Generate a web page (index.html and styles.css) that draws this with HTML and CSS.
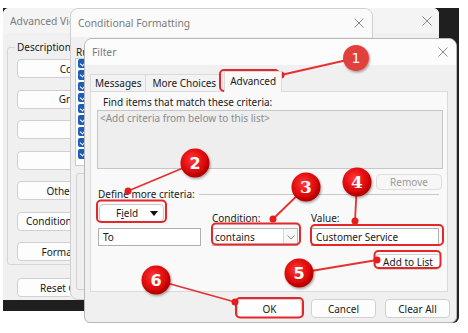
FILE: index.html
```html
<!DOCTYPE html>
<html lang="en">
<head>
<meta charset="utf-8">
<title>Filter</title>
<link rel="stylesheet" href="styles.css">
</head>
<body>
<div class="desk">
  <div class="backdrop"></div>

  <section class="win win-adv">
    <header class="tbar">
      <span class="ttl">Advanced View Settings: Compact</span>
      <svg class="close" viewBox="0 0 10 10"><path d="M0.5 0.5 9.5 9.5M9.5 0.5 0.5 9.5"/></svg>
    </header>
    <div class="adv-body">
      <fieldset class="grp">
        <legend>Description</legend>
        <button class="btn side">Columns...</button>
        <button class="btn side">Group By...</button>
        <button class="btn side">Sort...</button>
        <button class="btn side">Filter...</button>
        <button class="btn side">Other Settings...</button>
        <button class="btn side">Conditional Formatting...</button>
        <button class="btn side">Format Columns...</button>
      </fieldset>
      <button class="btn side reset">Reset Current View</button>
    </div>
  </section>

  <section class="win win-cf">
    <header class="tbar">
      <span class="ttl">Conditional Formatting</span>
      <svg class="close" viewBox="0 0 10 10"><path d="M0.5 0.5 9.5 9.5M9.5 0.5 0.5 9.5"/></svg>
    </header>
    <div class="cf-body">
      <div class="cf-label">Rules for this view:</div>
      <div class="cf-list">
        <span class="chk"></span><span class="chk"></span><span class="chk"></span>
        <span class="chk"></span><span class="chk"></span><span class="chk"></span>
        <span class="chk"></span><span class="chk"></span><span class="chk"></span>
      </div>
      <div class="cf-props"></div>
    </div>
  </section>

  <section class="win win-filter">
    <header class="tbar">
      <span class="ttl">Filter</span>
      <svg class="close" viewBox="0 0 10 10"><path d="M0.5 0.5 9.5 9.5M9.5 0.5 0.5 9.5"/></svg>
    </header>
    <div class="f-body">
      <div class="tabs">
        <span class="tab tab-msg">Messages</span>
        <span class="tab tab-more">More Choices</span>
        <span class="tab tab-adv active">Advanced</span>
      </div>
      <div class="panel">
        <div class="find">Find items that match these criteria:</div>
        <div class="crit-list">&lt;Add criteria from below to this list&gt;</div>
        <div class="remove-row"><button class="btn small disabled">Remove</button></div>
        <div class="define"><span>Define more criteria:</span><span class="rule"></span></div>
        <div class="crit-grid">
          <button class="btn field-btn"><span>F<u>i</u>eld</span><span class="tri"></span></button>
          <label class="lbl">Condition:</label>
          <label class="lbl">Value:</label>
          <div class="input">To</div>
          <div class="combo"><span class="combo-val">contains</span><span class="combo-arrow"><svg viewBox="0 0 8 5"><path d="M0.5 0.5 4 4 7.5 0.5"/></svg></span></div>
          <div class="input input-val">Customer Service</div>
        </div>
        <div class="add-row"><button class="btn small">Add to List</button></div>
      </div>
      <div class="actions">
        <button class="btn act">OK</button>
        <button class="btn act">Cancel</button>
        <button class="btn act">Clear All</button>
      </div>
    </div>
  </section>

  <svg class="marks" viewBox="0 0 468 333" width="468" height="333">
    <defs>
      <radialGradient id="ball" cx="42%" cy="38%" r="65%">
        <stop offset="0" stop-color="#ff3b3b"/>
        <stop offset="0.6" stop-color="#e10a0a"/>
        <stop offset="1" stop-color="#a80000"/>
      </radialGradient>
      <filter id="sh" x="-30%" y="-30%" width="160%" height="160%">
        <feDropShadow dx="1" dy="1.5" stdDeviation="1.2" flood-color="#000" flood-opacity="0.35"/>
      </filter>
    </defs>
    <g class="boxes">
      <rect x="220" y="70" width="59" height="21" rx="4"/>
      <rect x="97" y="200.5" width="69" height="21.5" rx="4"/>
      <rect x="212" y="223.5" width="88" height="21" rx="4"/>
      <rect x="311" y="225" width="132" height="20" rx="4"/>
      <rect x="374.5" y="251" width="66" height="17" rx="4"/>
      <rect x="236" y="298" width="67" height="19.5" rx="4"/>
    </g>
    <g class="lines">
      <line x1="356" y1="58" x2="281" y2="75"/>
      <line x1="195" y1="163" x2="128" y2="191"/>
      <line x1="306" y1="187" x2="273" y2="219"/>
      <line x1="357" y1="182" x2="355" y2="221"/>
      <line x1="299" y1="273" x2="377" y2="260"/>
      <line x1="156" y1="280" x2="235" y2="302"/>
    </g>
    <g class="dots">
      <circle cx="281" cy="75" r="3.5"/>
      <circle cx="128" cy="191" r="3.5"/>
      <circle cx="273" cy="219" r="3.5"/>
      <circle cx="355" cy="221" r="3.5"/>
      <circle cx="377" cy="260" r="3.5"/>
      <circle cx="235" cy="302" r="3.5"/>
    </g>
    <g class="balls">
      <circle class="flat" cx="356" cy="58" r="13"/>
      <circle cx="195" cy="163" r="14.5"/>
      <circle cx="306" cy="187" r="14.5"/>
      <circle cx="357" cy="182" r="14.5"/>
      <circle cx="299" cy="273" r="14.5"/>
      <circle cx="156" cy="280" r="14.5"/>
    </g>
    <g class="nums">
      <text x="356" y="63" class="n1">1</text>
      <text x="195" y="169">2</text>
      <text x="306" y="193" class="serif">3</text>
      <text x="357" y="188" class="serif">4</text>
      <text x="299" y="279">5</text>
      <text x="156" y="286">6</text>
    </g>
  </svg>
</div>
</body>
</html>
```

FILE: styles.css
```css
* { box-sizing: border-box; }
html, body { margin: 0; padding: 0; background: #ffffff; }
body {
  font-family: "Noto Sans", "Open Sans", sans-serif;
  font-size: 10px;
  color: #1a1a1a;
}
.desk { position: relative; width: 468px; height: 333px; overflow: hidden; }

.backdrop {
  position: absolute; left: 3px; top: 8px; width: 456px; height: 303px;
  background: #1f1f1f;
}

.win {
  position: absolute;
  display: flex; flex-direction: column;
  background: #f0f0f0;
  border: 1px solid #c9c9c9;
  border-radius: 8px;
  overflow: hidden;
}
.tbar {
  display: flex; align-items: center; justify-content: space-between;
  background: #f9f9f9;
  flex: none;
}
.ttl { color: #7b7b7b; font-size: 10.3px; white-space: nowrap; }
.close { width: 10px; height: 10px; fill: none; stroke: #8a8a8a; stroke-width: 1; flex: none; }

.btn {
  font: inherit; color: #1a1a1a;
  background: #fdfdfd;
  border: 1px solid #d0d0d0;
  border-radius: 4px;
  padding: 0;
  display: flex; align-items: center; justify-content: center;
}

/* Advanced View Settings window */
.win-adv { left: 3px; top: 8px; width: 436px; height: 292px; border: none; border-radius: 6px 6px 0 0; }
.win-adv .tbar { height: 25px; padding: 0 7px 0 7px; background: #f4f4f4; }
.win-adv .ttl { width: 60px; overflow: hidden; }
.adv-body { width: 67px; overflow: hidden; padding: 7px 0 0 4px; }
.grp {
  margin: 0; width: 300px;
  border: 1px solid #d6d6d6; border-radius: 3px;
  padding: 5px 0 3px 9px;
  display: flex; flex-direction: column; gap: 11.5px;
}
.grp legend { padding: 0 2px; margin-left: -2px; line-height: 14px; }
.btn.side { width: 135px; height: 19px; white-space: nowrap; flex: none; }
.reset { margin: 13px 0 0 10px; }

/* Conditional Formatting window */
.win-cf { left: 70px; top: 8px; width: 303px; height: 292px; border-color: #cfcfcf; }
.win-cf .tbar { height: 28px; padding: 0 8px 0 7px; background: #fafafa; }
.cf-body { padding: 9px 0 0 4px; display: flex; flex-direction: column; }
.cf-label { line-height: 12px; margin-left: 1px; width: 9px; overflow: hidden; white-space: nowrap; }
.cf-list {
  width: 200px; height: 108px;
  background: #ffffff; border: 1px solid #cacaca;
  padding: 0 0 0 2px;
  display: flex; flex-direction: column; gap: 2px;
}
.chk {
  position: relative;
  width: 10px; height: 9.3px; flex: none;
  background: #1d5cb7; border-radius: 2px;
}
.chk::after {
  content: ""; position: absolute; left: 3px; top: 1px;
  width: 3px; height: 5px;
  border: solid #fff; border-width: 0 1px 1px 0;
  transform: rotate(40deg);
}
.cf-props { margin: 7px 0 0 1px; width: 200px; height: 117px; border: 1px solid #d2d2d2; border-radius: 3px; }

/* Filter window */
.win-filter {
  left: 84px; top: 38px; width: 373px; height: 285px;
  border-color: #b8b8b8; border-radius: 8px 8px 6px 6px;
  box-shadow: 2px 0 0 #222;
}
.win-filter .tbar { height: 26px; padding: 0 8px 0 7px; background: #fcfcfc; }
.f-body { padding: 6px 8px 0 5px; display: flex; flex-direction: column; }

.tabs { display: flex; align-items: flex-end; height: 20px; }
.tab {
  height: 17px; line-height: 16px;
  padding: 0 4px;
  border: 1px solid #dadada; border-bottom: none;
  background: #f3f3f3;
  white-space: nowrap;
}
.tab-more { padding: 0 6px; }
.tab + .tab { margin-left: -1px; }
.tab.active {
  height: 21px; line-height: 19px;
  padding: 0 5px;
  background: #f9f9f9;
  margin-bottom: -1px; position: relative; z-index: 1;
  margin-left: 1px;
}
.panel {
  width: 358px; height: 201px;
  background: #f9f9f9; border: 1px solid #dadada;
  padding: 3px 4px 0 6px;
  display: flex; flex-direction: column;
}
.find { line-height: 14px; padding-left: 6px; }
.crit-list {
  margin-top: 1px; height: 59px; width: 346px;
  background: #eeeeee; border: 1px solid #c6c6c6;
  padding: 1px 0 0 2px;
  color: #8c8c8c; line-height: 13px;
}
.remove-row { display: flex; justify-content: flex-end; margin-top: 5px; padding-right: 1px; }
.btn.small { width: 66px; height: 16px; }
.btn.disabled { color: #9a9a9a; background: #f7f7f7; border-color: #dedede; }
.define { display: flex; align-items: center; height: 10px; margin-top: -1px; padding-left: 1px; }
.define .rule { flex: 1; height: 1px; background: #c8c8c8; margin: 1px 4px 0 4px; }

.crit-grid {
  display: grid;
  grid-template-columns: 103px 86px 130px;
  grid-template-rows: 18px 18px;
  column-gap: 11px; row-gap: 6px;
  margin-top: 5px; padding-left: 1px;
}
.crit-grid > :nth-child(3n+3) { margin-left: 2px; }
.field-btn {
  width: 65px; height: 18px; margin-left: 1px;
  justify-content: space-between;
  padding: 0 3px 0 16px;
  background: #ffffff; border-color: #c8c8c8;
}
.field-btn u { text-decoration-thickness: 1px; text-underline-offset: 1px; }
.tri { width: 0; height: 0; border-left: 4px solid transparent; border-right: 4px solid transparent; border-top: 5px solid #111; margin-right: 2px; }
.lbl { align-self: end; line-height: 12px; margin-bottom: -2px; }
.input {
  height: 18px; line-height: 16px;
  background: #ffffff; border: 1px solid #b0b0b0;
  padding-left: 4px; white-space: nowrap;
}
.input-val { border-bottom-color: #7b7b7b; }
.combo {
  display: flex; height: 18px;
  background: #ffffff; border: 1px solid #b8b8b8;
}
.combo-val { flex: 1; line-height: 16px; padding-left: 2px; }
.combo-arrow {
  width: 14px; border-left: 1px solid #d8d8d8; background: #f7f7f7;
  display: flex; align-items: center; justify-content: center;
}
.combo-arrow svg { width: 8px; height: 5px; fill: none; stroke: #8a8a8a; stroke-width: 1; }
.add-row { display: flex; justify-content: flex-end; margin-top: 8px; padding-right: 2px; }

.actions { display: flex; justify-content: flex-end; gap: 9px; margin-top: 7px; margin-right: -2px; }
.btn.act { width: 65px; height: 19px; }

/* annotations */
.marks { position: absolute; left: 0; top: 0; pointer-events: none; }
.boxes rect { fill: none; stroke: #e4282a; stroke-width: 2; }
.lines line { stroke: #e83030; stroke-width: 1.8; }
.dots circle { fill: #e31e1e; }
.balls circle { fill: url(#ball); filter: url(#sh); }
.balls circle.flat { fill: #e2403d; }
.nums text {
  fill: #ffffff; text-anchor: middle;
  font-family: "DejaVu Sans", sans-serif; font-weight: bold; font-size: 16px;
}
.nums text.serif { font-family: "DejaVu Serif", serif; font-size: 17px; }
.nums text.n1 { font-weight: normal; font-size: 14px; }
```
